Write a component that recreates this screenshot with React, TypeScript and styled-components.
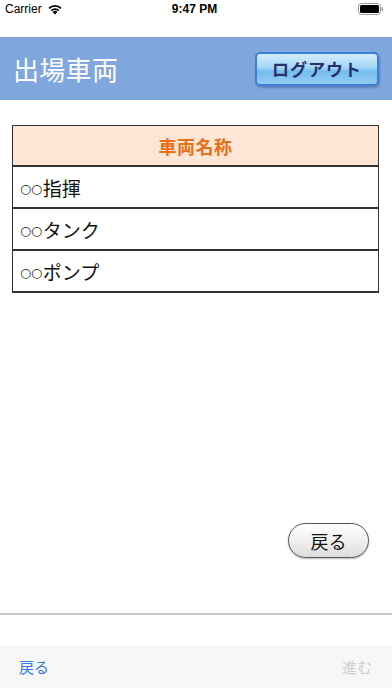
import React from "react";
import styled, { createGlobalStyle } from "styled-components";

const Global = createGlobalStyle`
  html, body { margin: 0; padding: 0; background: #fff; }
  body { font-family: "Noto Sans CJK JP", "Liberation Sans", sans-serif; }
  * { box-sizing: border-box; }
`;

const Screen = styled.div`
  width: 392px;
  height: 696px;
  display: flex;
  flex-direction: column;
  background: #fff;
  overflow: hidden;
`;

const StatusBar = styled.div`
  height: 37px;
  display: grid;
  grid-template-columns: 1fr auto 1fr;
  align-items: start;
  padding: 1px 8px 0 5px;
  font-family: "Liberation Sans", "Noto Sans", sans-serif;
  font-size: 12px;
  color: #000;
`;

const StatusLeft = styled.div`
  display: flex;
  align-items: center;
  gap: 5px;
  height: 16px;
`;

const StatusTime = styled.div`
  font-weight: 700;
  font-size: 12px;
  height: 16px;
  line-height: 16px;
`;

const StatusRight = styled.div`
  display: flex;
  justify-content: flex-end;
  align-items: center;
  height: 16px;
`;

const Header = styled.div`
  height: 63px;
  background: #80a7dd;
  display: flex;
  align-items: center;
  justify-content: space-between;
  padding: 0 13px 0 13px;
`;

const Title = styled.div`
  color: #fff;
  font-size: 26px;
  font-weight: 400;
  letter-spacing: 0.3px;
`;

const LogoutButton = styled.div`
  width: 124px;
  height: 34px;
  border: 2px solid #3b7fd9;
  border-radius: 5px;
  background: linear-gradient(#d4edfc 0%, #a3d6f6 45%, #74bdee 58%, #93cdf2 100%);
  box-shadow: 1px 2px 2px rgba(40, 60, 120, 0.35);
  display: flex;
  align-items: center;
  justify-content: center;
  color: #2a2f6a;
  font-weight: 700;
  font-size: 17px;
  letter-spacing: 1px;
`;

const Content = styled.div`
  flex: 1;
  display: flex;
  flex-direction: column;
  padding: 25px 13px 0 12px;
`;

const Table = styled.div`
  border: 1.5px solid #333;
  border-bottom-width: 2px;
  display: flex;
  flex-direction: column;
`;

const HeadCell = styled.div`
  height: 41px;
  background: #fde6d5;
  color: #e7701c;
  font-weight: 700;
  font-size: 18px;
  letter-spacing: 0.5px;
  display: flex;
  align-items: center;
  justify-content: center;
  border-bottom: 2.5px solid #333;
`;

const Row = styled.div<{ $last?: boolean }>`
  height: ${(p) => (p.$last ? 40 : 42)}px;
  display: flex;
  align-items: center;
  padding-left: 7px;
  font-size: 19px;
  color: #111;
  border-bottom: ${(p) => (p.$last ? "none" : "2px solid #333")};
`;

const Marks = styled.span`
  font-family: "DejaVu Sans", sans-serif;
  font-size: 12.5px;
  margin-top: 3px;
  margin-right: 1px;
  color: #111;
`;

const BackArea = styled.div`
  display: flex;
  justify-content: flex-end;
  margin-top: 230px;
  padding-right: 10px;
`;

const PillButton = styled.div`
  width: 81px;
  height: 35px;
  border-radius: 18px;
  border: 1.5px solid #555;
  background: linear-gradient(#ffffff 0%, #f0f0f0 50%, #dcdcdc 100%);
  box-shadow: 0 1px 2px rgba(0, 0, 0, 0.3);
  display: flex;
  align-items: center;
  justify-content: center;
  font-size: 18px;
  color: #111;
`;

const Separator = styled.div`
  height: 2px;
  background: #c8c8c8;
`;

const Gap = styled.div`
  height: 30px;
  background: #fff;
`;

const Toolbar = styled.div`
  height: 43px;
  background: #f7f7f7;
  display: flex;
  align-items: center;
  justify-content: space-between;
  padding: 0 20px 0 19px;
  font-size: 15px;
`;

const ToolButton = styled.span<{ $disabled?: boolean }>`
  color: ${(p) => (p.$disabled ? "#cfcfcf" : "#3579e6")};
`;

const HomeArea = styled.div`
  height: 8px;
  background: #fff;
`;

const Wifi = () => (
  <svg width="16" height="12" viewBox="0 0 16 12">
    <path d="M8 11.5 L5.6 9 A3.4 3.4 0 0 1 10.4 9 Z" fill="#000" />
    <path d="M3.6 7 A6.2 6.2 0 0 1 12.4 7 L11.1 8.3 A4.4 4.4 0 0 0 4.9 8.3 Z" fill="#000" />
    <path d="M1.4 4.8 A9.3 9.3 0 0 1 14.6 4.8 L13.3 6.1 A7.4 7.4 0 0 0 2.7 6.1 Z" fill="#000" />
  </svg>
);

const Battery = () => (
  <svg width="26" height="12" viewBox="0 0 26 12">
    <rect x="0.5" y="0.5" width="22" height="11" rx="3" fill="none" stroke="#999" />
    <rect x="2" y="2" width="19" height="8" rx="1.5" fill="#000" />
    <rect x="23.5" y="4" width="1.5" height="4" rx="0.7" fill="#999" />
  </svg>
);

const vehicles = ["指揮", "タンク", "ポンプ"];

export default function App() {
  return (
    <>
      <Global />
      <Screen>
        <StatusBar>
          <StatusLeft>
            <span>Carrier</span>
            <Wifi />
          </StatusLeft>
          <StatusTime>9:47 PM</StatusTime>
          <StatusRight>
            <Battery />
          </StatusRight>
        </StatusBar>
        <Header>
          <Title>出場車両</Title>
          <LogoutButton>ログアウト</LogoutButton>
        </Header>
        <Content>
          <Table>
            <HeadCell>車両名称</HeadCell>
            {vehicles.map((v, i) => (
              <Row key={v} $last={i === vehicles.length - 1}>
                <Marks>○○</Marks>
                {v}
              </Row>
            ))}
          </Table>
          <BackArea>
            <PillButton>戻る</PillButton>
          </BackArea>
        </Content>
        <Separator />
        <Gap />
        <Toolbar>
          <ToolButton>戻る</ToolButton>
          <ToolButton $disabled>進む</ToolButton>
        </Toolbar>
        <HomeArea />
      </Screen>
    </>
  );
}
